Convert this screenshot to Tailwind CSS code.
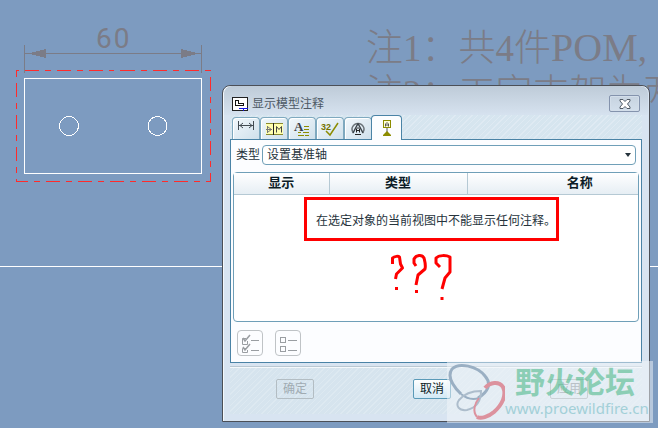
<!DOCTYPE html>
<html lang="zh-CN">
<head>
  <meta charset="UTF-8">
  <title>显示模型注释</title>
  <script src="https://cdn.jsdelivr.net/npm/@tailwindcss/browser@4"></script>
</head>
<body class="relative h-screen overflow-hidden bg-[#7d9bc0] font-['Liberation_Sans','Noto_Sans_CJK_SC',sans-serif] text-xs text-[#26333c]">

  <!-- Dibujo de fondo -->
  <svg class="absolute left-0 top-0" width="220" height="200" fill="none" shape-rendering="crispEdges">
    <g stroke="#7b7c87">
      <path d="M24.5 45v28M201.5 45v28M25 53.5h176" />
      <path d="M28 53.5l18-4.5v9zM199 53.5l-18-4.5v9z" fill="#7b7c87" stroke="none" />
    </g>
    <rect x="16.5" y="70.5" width="194" height="111" stroke="#ff2b2b" stroke-dasharray="14 6 6 6" stroke-dashoffset="-8" />
    <rect x="24.5" y="78.5" width="177" height="95" stroke="#fff" />
    <circle cx="69" cy="126" r="9.5" stroke="#fff" />
    <circle cx="157.5" cy="126" r="9.5" stroke="#fff" />
  </svg>
  <p class="absolute left-[96px] top-[23px] flex gap-[2px] font-['Roboto',sans-serif] text-[28px] leading-8 text-[#7b7c87]"><span>6</span><span>0</span></p>
  <div class="absolute left-0 right-0 top-[266px] h-px bg-white"></div>

  <div class="absolute left-[366px] top-[25px] whitespace-nowrap font-['Liberation_Serif','Noto_Sans_CJK_SC',serif] text-[37px] font-light leading-[45px] text-[#7b7c87]">
    <p>注1：共4件<span class="text-[40px]">POM</span>,</p>
    <p>注2：工字支架为两</p>
  </div>

  <!-- Ventana -->
  <section class="absolute bottom-[6px] left-[222px] right-2 top-[85px] flex flex-col rounded-t-lg border border-[#4b4f57] bg-[#d8e4f1] px-[7px] pb-[7px] shadow-[inset_1px_1px_0_#f4f8fc]">
    <header class="-mx-[6px] flex h-[29px] shrink-0 items-center rounded-t-lg bg-linear-to-b from-[#becbd8] to-[#d6e2ef] px-2 pt-[6px]">
      <svg width="16" height="14" fill="none" shape-rendering="crispEdges">
        <rect x=".5" y=".5" width="15" height="13" fill="#fff" stroke="#222" />
        <path d="M3.5 3.5h3v3h5v2h-8z" stroke="#111" />
        <path d="M7 11.5h9M11.5 11v3" stroke="#1414e6" />
      </svg>
      <h1 class="ml-1 flex-1 text-[#4d5965]">显示模型注释</h1>
      <button aria-label="关闭" class="flex h-[17px] w-[31px] items-center justify-center rounded-xs border border-[#8493ad] shadow-[inset_0_0_0_1px_#d3deea]">
        <svg width="12" height="10" viewBox="0 0 12 10"><path d="M1 .5h3l2 2 2-2h3V2L8.5 5 11 8v1.5H8l-2-2-2 2H1V8l2.5-3L1 2z" fill="#fff" stroke="#505a66" /></svg>
      </button>
    </header>

    <nav role="tablist" class="flex h-6 shrink-0 items-end bg-[repeating-linear-gradient(135deg,#d6e5ef_0_3px,#dfeaf3_3px_4px)] pl-[2px]">
      <button role="tab" aria-label="尺寸" class="flex h-[22px] w-7 justify-center rounded-t border border-b-0 border-[#7fa9bf] bg-linear-to-br from-[#f2f8fc] to-[#cfe0eb] pt-[3px] shadow-[inset_1px_1px_0_#fff]">
        <svg width="18" height="10" fill="none" stroke="#424b52"><path d="M1.5 0v9M16.5 0v9M2 4.5h14" shape-rendering="crispEdges" /><path d="M6 2L3 4.5 6 7M12 2l3 2.5L12 7" /></svg>
      </button>
      <button role="tab" aria-label="几何公差" class="flex h-[22px] w-7 justify-center rounded-t border border-b-0 border-[#7fa9bf] bg-linear-to-br from-[#f2f8fc] to-[#cfe0eb] pt-[5px] shadow-[inset_1px_1px_0_#fff]">
        <svg width="17" height="12" fill="none">
          <path d="M0 0h17v12H0z" fill="#ffffb0" />
          <path d="M0 .5h17M0 11.5h17" stroke="#8a8a30" /><path d="M7.5 0v12" stroke="#222" />
          <path d="M1.5 3v7M2 4l3.5 2.5L2 9M0 6.5h6" stroke="#777" />
          <path d="M10.5 9.5v-6l2.500 3 2.500-3v6" stroke="#444" />
        </svg>
      </button>
      <button role="tab" aria-label="注解" class="flex h-[22px] w-7 justify-center rounded-t border border-b-0 border-[#7fa9bf] bg-linear-to-br from-[#f2f8fc] to-[#cfe0eb] pt-[3px] shadow-[inset_1px_1px_0_#fff]">
        <svg width="16" height="16" fill="none" class="overflow-visible">
          <text x="0" y="10" class="font-['Liberation_Serif',serif] text-[13px] font-bold" fill="#3b4046">A</text>
          <path d="M10 5.5h5M10 8.5h5M4 11.5h3M9 11.5h6M4 14.5h6M11 14.5h4" stroke="#8c8c00" shape-rendering="crispEdges" />
        </svg>
      </button>
      <button role="tab" aria-label="表面粗糙度" class="flex h-[22px] w-7 justify-center rounded-t border border-b-0 border-[#7fa9bf] bg-linear-to-br from-[#f2f8fc] to-[#cfe0eb] pt-[3px] shadow-[inset_1px_1px_0_#fff]">
        <svg width="18" height="16" fill="none" class="overflow-visible">
          <text x="0" y="9" class="font-['Liberation_Sans',sans-serif] text-[9px] font-bold" fill="#747400">32</text>
          <path d="M5 10l4 4 8-12" stroke="#8c8c00" stroke-width="1.5" />
        </svg>
      </button>
      <button role="tab" aria-label="符号" class="flex h-[22px] w-7 justify-center rounded-t border border-b-0 border-[#7fa9bf] bg-linear-to-br from-[#f2f8fc] to-[#cfe0eb] pt-[4px] shadow-[inset_1px_1px_0_#fff]">
        <svg width="14" height="14" fill="none">
          <path d="M2.5 11C1 9 .5 7 1.5 5 2.5 3 4.5 1.500 7 1.500S11.500 3 12.500 5c1 2 .5 4-1 6" stroke="#6a7278" stroke-width="1.5" />
          <path d="M7 1.500l5 9.500M7 1.500L2 11" stroke="#3d454b" stroke-width="1.5" />
          <path d="M5.500 10.500V7L7 5.500 8.500 7v3.500M5.500 8.500h3M4 12.500h6" stroke="#222" />
        </svg>
      </button>
      <button role="tab" aria-selected="true" aria-label="基准" class="relative -mb-px -ml-px flex h-[25px] w-[31px] justify-center rounded-t border border-b-0 border-[#4a83a6] bg-[#fcfdff] pt-1">
        <svg width="10" height="17" fill="none">
          <rect x="1.5" y=".5" width="7" height="7" fill="#ffffd8" stroke="#8c8c00" />
          <path d="M3.5 6.500V4L5 2.500 6.500 4v2.500M3.500 5h3" stroke="#555" />
          <path d="M5 8v4" stroke="#555" />
          <path d="M5 11l4 4v1H1v-1z" fill="#8c8c00" />
        </svg>
      </button>
    </nav>

    <main class="flex min-h-0 flex-1 flex-col border border-[#4a83a6] bg-[#fcfdff] px-[2px] pb-[6px] pt-[5px]">
      <div class="flex h-5 shrink-0 items-center px-[3px]">
        <label for="tipo" class="w-[26px] shrink-0 whitespace-nowrap">类型</label>
        <div class="relative flex-1">
          <select id="tipo" class="block h-5 w-full appearance-none rounded-sm border border-[#6f9fb8] bg-white pl-1 leading-4">
            <option>设置基准轴</option>
          </select>
          <svg class="pointer-events-none absolute right-[5px] top-2" width="6" height="4"><path d="M0 0h6L3 4z" fill="#26333c" /></svg>
        </div>
      </div>

      <div class="relative mt-[7px] min-h-0 flex-1 rounded border border-[#6f9fb8] bg-white">
        <table class="w-full table-fixed">
          <thead>
            <tr class="h-[21px] bg-linear-to-b from-white to-[#e6eef4] text-[13px] leading-5 text-[#0c1c26]">
              <th class="w-[95px] border-b border-r border-[#b5c9d4]">显示</th>
              <th class="w-[138px] border-b border-r border-[#b5c9d4]">类型</th>
              <th class="border-b border-[#b5c9d4] pl-[54px]">名称</th>
            </tr>
          </thead>
          <tbody>
            <tr class="h-[54px]">
              <td colspan="3" class="whitespace-nowrap text-center">在选定对象的当前视图中不能显示任何注释。</td>
            </tr>
          </tbody>
        </table>
        <!-- Marcas en rojo -->
        <div class="pointer-events-none absolute left-[70px] top-6 h-11 w-[255px] border-3 border-[#ff0000]"></div>
        <svg class="pointer-events-none absolute left-[156px] top-[79px]" width="64" height="50" fill="none" stroke="#ff0000" stroke-width="3" stroke-linejoin="round">
          <path d="M2.5 12V6c2-2 6-2 7-1l1 7 2 4-6 6-1 5" />
          <path d="M26 14l-2-3V7c2-4 8-5 10-1 1 4 2 7 1 11l-7 6-2 10" />
          <path d="M50 15l-4-4V6c3-3 10-3 14-1v15l-5 6-3 11" />
          <path d="M5 36.5h3M25 39.5h3M50.5 46.5h3" />
        </svg>
      </div>

      <div class="mt-2 flex shrink-0 gap-3 pl-1">
        <button aria-label="全选" disabled class="flex size-[26px] items-center justify-center rounded border border-[#bfc3c6]">
          <svg width="20" height="20" fill="none" stroke="#9a9ea2">
            <path d="M6 5.5H2.5v6h5V8M6 15.5H2.5v4h5V17" /><path d="M3 5l2 3 5-6M3 14l2 3 5-6" stroke-width="1.5" /><path d="M11 7.5h8M11 17.5h8" />
          </svg>
        </button>
        <button aria-label="取消全选" disabled class="flex size-[26px] items-center justify-center rounded border border-[#bfc3c6]">
          <svg width="18" height="18" fill="none" stroke="#9a9ea2" shape-rendering="crispEdges">
            <rect x="1.5" y="3.5" width="5" height="5" /><rect x="1.5" y="12.5" width="5" height="5" /><path d="M9 6.5h9M9 16.5h9" />
          </svg>
        </button>
      </div>
    </main>

    <footer class="mt-[3px] flex h-12 shrink-0 gap-[99px] border-t border-[#b9c8d2] bg-[repeating-linear-gradient(135deg,#d6e4ee_0_3px,#dde9f1_3px_4px)] pl-[46px] pt-3 shadow-[inset_0_1px_0_#f5f9fc]">
      <button disabled class="h-5 w-[38px] rounded-xs border border-[#b3bdc3] leading-4 text-[#a0abb2]">确定</button>
      <button class="h-5 w-[38px] rounded-xs border border-[#5a9ab8] bg-linear-to-b from-white to-[#d3e9f5] leading-4 text-[#0c1c26]">取消</button>
      <button disabled class="h-5 w-[38px] rounded-xs border border-[#a3adb3] leading-4 text-[#808b92]">应用</button>
    </footer>
  </section>

  <!-- Marca de agua -->
  <aside class="pointer-events-none absolute bottom-[5px] right-[5px] flex h-[62px] w-[206px] bg-[#f2f6fa]/50">
    <svg class="shrink-0" width="58" height="62" fill="none">
      <path d="M31 37c10-6 14-14 7-22C30 5 12 1 5 8c-5 7 1 17 9 25" stroke="#9aafc3" stroke-width="3" />
      <path d="M14 33c6 5 12 6 18 4" stroke="#9aafc3" stroke-width="2" />
      <path d="M34 30c-8 0-17 3-22 9-4 6 0 11 8 10 8-2 14-8 14-19z" stroke="#adbdcc" stroke-width="2" />
      <path d="M38 27c5-6 14-7 18-1 4 8-1 18-9 25-6 5-13 7-17 5" stroke="#dc929e" stroke-width="4" />
      <path d="M32 37c-4 5-7 13-2 19" stroke="#dc929e" stroke-width="2" />
    </svg>
    <div class="whitespace-nowrap">
      <p class="pl-[10px] pt-[3px] font-['Noto_Sans_CJK_SC',sans-serif] text-[30px] font-bold leading-8 text-[#4fb98a]/60">野火论坛</p>
      <p class="font-['Noto_Sans',sans-serif] text-[15px] leading-6 text-[#a3d0d8]">www.proewildfire.cn</p>
    </div>
  </aside>
</body>
</html>
